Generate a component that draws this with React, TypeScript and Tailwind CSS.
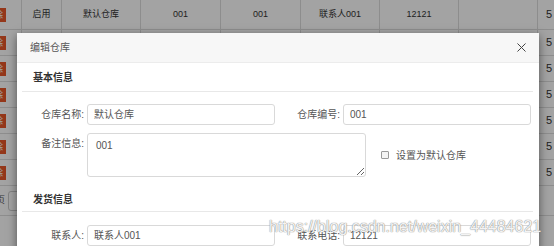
import { X } from "lucide-react";

const rows = [30, 26, 26, 26, 26, 26, 26];

function BgRow({ h }: { h: number }) {
  return (
    <div
      className="grid grid-cols-[22px_40px_79px_80px_80px_79px_79px_79px_60px] border-b border-[#dddddd] text-[9px] text-[#333333] items-center"
      style={{ height: h }}
    >
      <div className="h-full flex items-center justify-end pr-[15px] overflow-hidden border-r border-[#dddddd]">
        <span className="shrink-0 bg-[#e8562a] text-white px-[3px] leading-[14px]">删除</span>
      </div>
      <div className="h-full flex items-center justify-center border-r border-[#dddddd]">启用</div>
      <div className="h-full flex items-center justify-center border-r border-[#dddddd]">默认仓库</div>
      <div className="h-full flex items-center justify-center border-r border-[#dddddd]">001</div>
      <div className="h-full flex items-center justify-center border-r border-[#dddddd]">001</div>
      <div className="h-full flex items-center justify-center border-r border-[#dddddd]">联系人001</div>
      <div className="h-full flex items-center justify-center border-r border-[#dddddd]">12121</div>
      <div className="h-full border-r border-[#dddddd]"></div>
      <div className="h-full flex items-center pl-[8px] text-[11px]">5</div>
    </div>
  );
}

function Field({ label, value, labelW }: { label: string; value: string; labelW: number }) {
  return (
    <div className="flex items-center">
      <div className="text-right pr-[3px] text-[10px] text-[#555555]" style={{ width: labelW }}>
        {label}
      </div>
      <div className="w-[188px] h-[21px] border border-[#d9d9d9] rounded-[3px] px-[6px] flex items-center text-[10px] text-[#555555]">
        {value}
      </div>
    </div>
  );
}

export default function App() {
  return (
    <div
      className="relative w-[554px] h-[246px] overflow-hidden bg-white"
      style={{ fontFamily: '"Liberation Sans", "Noto Sans CJK SC", sans-serif' }}
    >
      <div className="flex flex-col">
        {rows.map((h, i) => (
          <BgRow key={i} h={h} />
        ))}
        <div className="h-[30px] flex items-center gap-[3px] text-[9px] text-[#555555] border-b border-[#dddddd]">
          <span className="-ml-[4px]">页</span>
          <span className="w-[12px] h-[20px] border border-[#cccccc] rounded-[3px]"></span>
        </div>
      </div>

      <div className="absolute inset-0 bg-black/[0.36]"></div>

      <div className="absolute left-[17px] top-[33px] w-[522px] h-[240px] bg-white shadow-[0_3px_9px_rgba(0,0,0,0.5)]">
        <div className="h-[30px] bg-[#f7f7f7] border-b border-[#ececec] flex items-center justify-between pl-[13px] pr-[10px]">
          <span className="text-[10px] text-[#555555]">编辑仓库</span>
          <X size={15} strokeWidth={1.6} className="text-[#444444]" />
        </div>

        <div className="px-[5px] pr-[6px]">
          <div className="h-[29px] border-b border-[#e8e8e8] flex items-center pl-[11px] text-[10px] font-bold text-[#333333]">
            基本信息
          </div>

          <div className="mt-[12px] flex">
            <Field label="仓库名称:" value="默认仓库" labelW={65} />
            <Field label="仓库编号:" value="001" labelW={68} />
          </div>

          <div className="mt-[8px] flex">
            <div className="w-[65px] text-right pr-[3px] pt-[3px] text-[10px] text-[#555555]">备注信息:</div>
            <textarea
              defaultValue="001"
              className="w-[279px] h-[44px] border border-[#d9d9d9] rounded-[3px] px-[8px] py-[4px] text-[10px] text-[#555555] outline-none"
            />
            <div className="ml-[15px] flex items-center gap-[7px] text-[10px] text-[#555555]">
              <span className="w-[8px] h-[8px] border border-[#9a9a9a] rounded-[1px] bg-[#f4f4f4]"></span>
              <span>设置为默认仓库</span>
            </div>
          </div>

          <div className="mt-[10px] h-[25px] border-b border-[#e8e8e8] flex items-center pl-[11px] text-[10px] font-bold text-[#333333]">
            发货信息
          </div>

          <div className="mt-[13px] flex">
            <Field label="联系人:" value="联系人001" labelW={65} />
            <Field label="联系电话:" value="12121" labelW={68} />
          </div>
        </div>
      </div>

      <div className="absolute left-[269px] top-[215px] text-[16px] text-white/90 [text-shadow:0_0_1px_#888,0_0_1px_#888]">
        https://blog.csdn.net/weixin_44484621
      </div>
    </div>
  );
}
